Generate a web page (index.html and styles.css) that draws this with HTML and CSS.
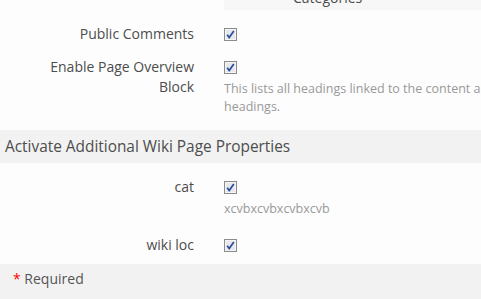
FILE: index.html
```html
<!DOCTYPE html>
<html lang="en">
<head>
	<meta charset="UTF-8">
	<title>wiki settings</title>
	<link rel="stylesheet" href="styles.css">
</head>
<body>
	<div class="prev">
		<div class="prev-box"><span>Categories</span></div>
	</div>

	<div class="row first">
		<div class="label">Public Comments</div>
		<div class="field">
			<div class="check"><svg width="13" height="13" viewBox="0 0 13 13"><rect x="0.5" y="0.5" width="12" height="12" fill="#e6e8ec" stroke="#8b8b8b"/><rect x="1.5" y="1.5" width="10" height="10" fill="none" stroke="#f4f5f7"/><path d="M3.2 6.8 L5.2 9.6 L9.8 3" fill="none" stroke="#2d4b9b" stroke-width="1.7"/></svg></div>
		</div>
	</div>

	<div class="row">
		<div class="label">Enable Page Overview<br>Block</div>
		<div class="field">
			<div class="check"><svg width="13" height="13" viewBox="0 0 13 13"><rect x="0.5" y="0.5" width="12" height="12" fill="#e6e8ec" stroke="#8b8b8b"/><rect x="1.5" y="1.5" width="10" height="10" fill="none" stroke="#f4f5f7"/><path d="M3.2 6.8 L5.2 9.6 L9.8 3" fill="none" stroke="#2d4b9b" stroke-width="1.7"/></svg></div>
			<p class="help">This lists all headings linked to the content and links to those<br>headings.</p>
		</div>
	</div>

	<h3 class="section">Activate Additional Wiki Page Properties</h3>

	<div class="row props">
		<div class="label">cat</div>
		<div class="field">
			<div class="check"><svg width="13" height="13" viewBox="0 0 13 13"><rect x="0.5" y="0.5" width="12" height="12" fill="#e6e8ec" stroke="#8b8b8b"/><rect x="1.5" y="1.5" width="10" height="10" fill="none" stroke="#f4f5f7"/><path d="M3.2 6.8 L5.2 9.6 L9.8 3" fill="none" stroke="#2d4b9b" stroke-width="1.7"/></svg></div>
			<p class="help">xcvbxcvbxcvbxcvb</p>
		</div>
	</div>

	<div class="row last">
		<div class="label">wiki loc</div>
		<div class="field">
			<div class="check"><svg width="13" height="13" viewBox="0 0 13 13"><rect x="0.5" y="0.5" width="12" height="12" fill="#e6e8ec" stroke="#8b8b8b"/><rect x="1.5" y="1.5" width="10" height="10" fill="none" stroke="#f4f5f7"/><path d="M3.2 6.8 L5.2 9.6 L9.8 3" fill="none" stroke="#2d4b9b" stroke-width="1.7"/></svg></div>
		</div>
	</div>

	<div class="footer"><span class="req">*</span> Required</div>
</body>
</html>
```

FILE: styles.css
```css
* {
	margin: 0;
	padding: 0;
	box-sizing: border-box;
}
html, body {
	overflow: hidden;
}
body {
	width: 481px;
	background-color: #fdfdfd;
	font-family: "Open Sans", "Liberation Sans", sans-serif;
	font-size: 14px;
	line-height: 20px;
	color: #4d4d4d;
}
.prev {
	display: flex;
	padding-left: 224px;
}
.prev-box {
	flex: 1;
	height: 10px;
	overflow: hidden;
	background-color: #f7f7f7;
	padding-left: 69px;
}
.prev-box span {
	display: block;
	margin-top: -12px;
	line-height: 20px;
}
.row {
	display: flex;
	gap: 30px;
	margin-top: 13px;
}
.row.first {
	margin-top: 14px;
}
.row.props {
	margin-top: 14px;
}
.row.last {
	margin-top: 17px;
}
.label {
	width: 194px;
	flex-shrink: 0;
	text-align: right;
}
.field {
	flex: 1;
	min-width: 0;
	white-space: nowrap;
}
.check {
	height: 20px;
	padding-top: 4px;
}
.check svg {
	display: block;
}
.help {
	margin-top: 3px;
	font-size: 12.5px;
	line-height: 18px;
	color: #999;
}
.section {
	margin-top: 14px;
	height: 33px;
	padding: 6px 5px 0;
	background-color: #f2f2f2;
	font-size: 15.4px;
	font-weight: normal;
	line-height: 22px;
	color: #4d4d4d;
}
.footer {
	margin-top: 9px;
	height: 40px;
	padding: 5px 13px 0;
	background-color: #f2f2f2;
	color: #555;
}
.req {
	color: #f00;
}
```
